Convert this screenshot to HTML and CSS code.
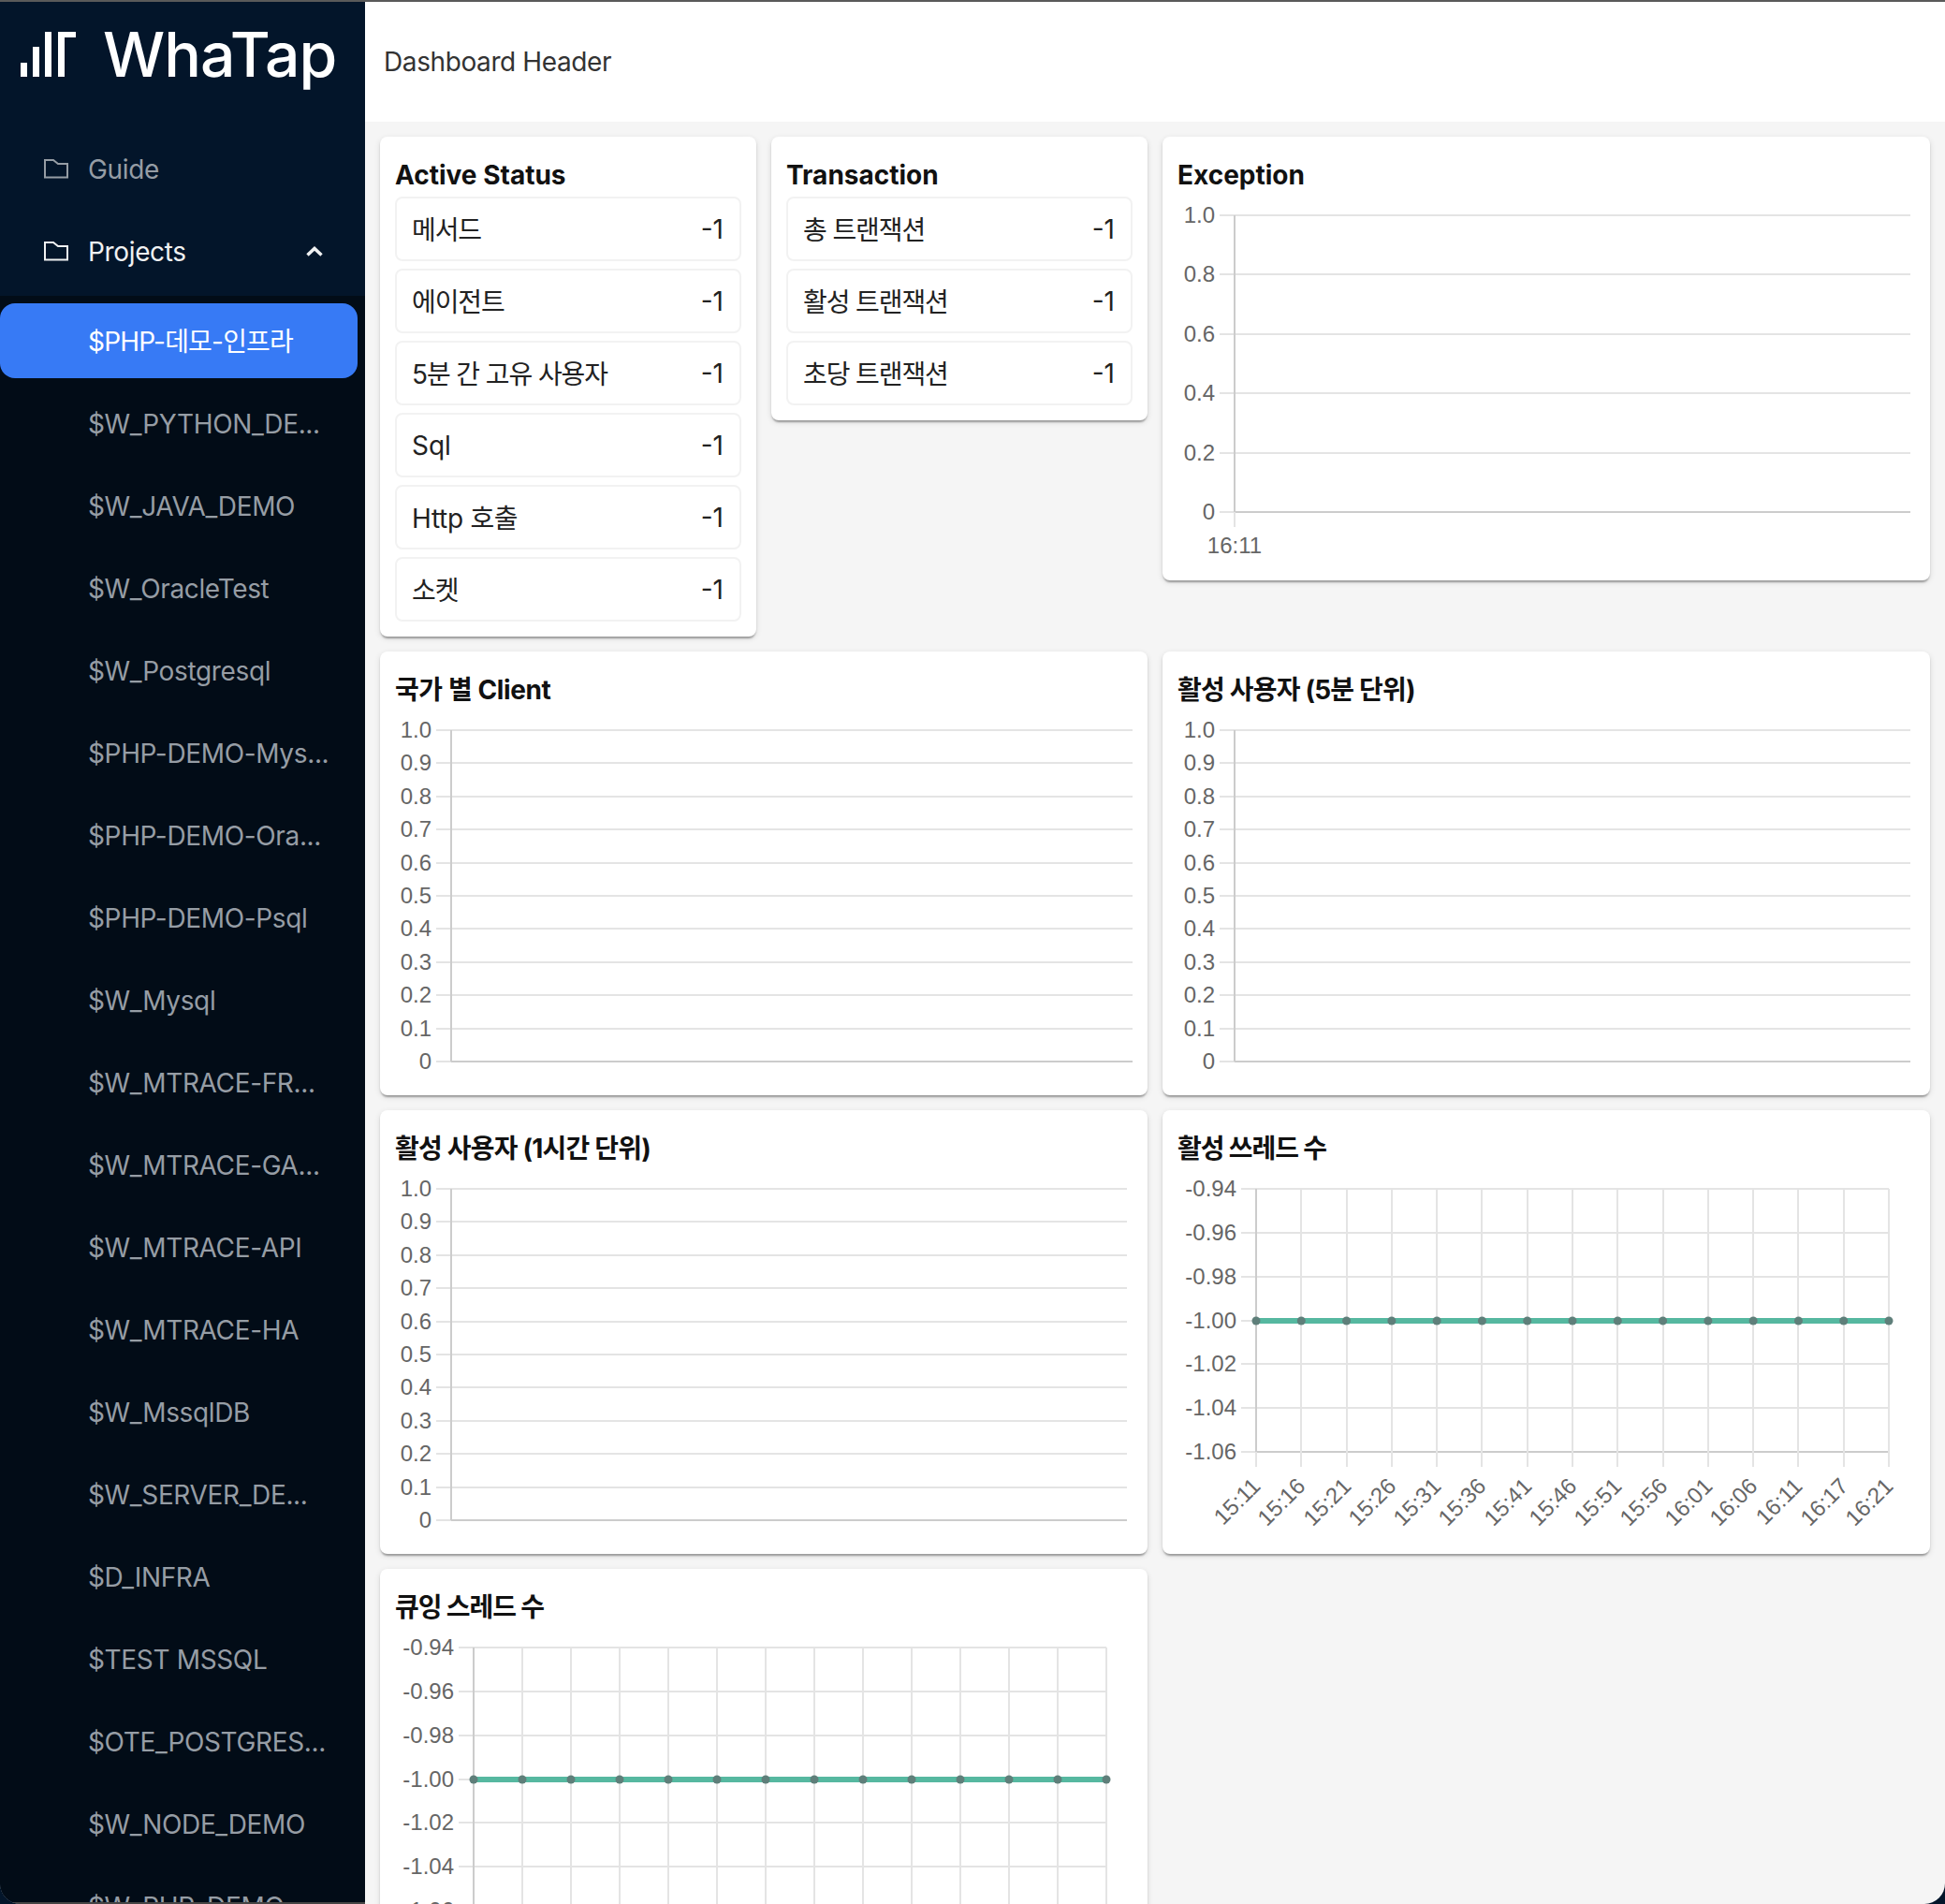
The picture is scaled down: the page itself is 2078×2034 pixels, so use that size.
FILE: index.html

```html
<!DOCTYPE html>
<html lang="ko">
<head>
  <meta charset="UTF-8" />
  <title>WhaTap Dashboard</title>
  <link rel="stylesheet" href="styles.css">
</head>
<body>
  <div class="app">
    <aside class="sidebar">
      <div class="logo">
        <svg class="logo-mark" width="59" height="48" viewBox="0 0 59 48">
          <rect x="0" y="33" width="7" height="15" />
          <rect x="13" y="16" width="7" height="32" />
          <rect x="26" y="0" width="7" height="48" />
          <path d="M40 0H59V6H47V48H40Z" />
        </svg>
        <span class="logo-text">WhaTap</span>
      </div>

      <nav class="menu">
        <div class="menu-item">
          <svg class="folder" width="26" height="22" viewBox="0 0 26 22"><path d="M1 2H10L15 6H25V20.5H1Z" /></svg>
          <span>Guide</span>
        </div>
        <div class="menu-item open">
          <svg class="folder" width="26" height="22" viewBox="0 0 26 22"><path d="M1 2H10L15 6H25V20.5H1Z" /></svg>
          <span>Projects</span>
          <svg class="chevron" width="18" height="11" viewBox="0 0 18 11"><path d="M1.500 9.500L9 2.500L16.500 9.500" /></svg>
        </div>
        <div class="submenu">
          <div class="sub-item active">$PHP-데모-인프라</div>
          <div class="sub-item">$W_PYTHON_DE...</div>
          <div class="sub-item">$W_JAVA_DEMO</div>
          <div class="sub-item">$W_OracleTest</div>
          <div class="sub-item">$W_Postgresql</div>
          <div class="sub-item">$PHP-DEMO-Mys...</div>
          <div class="sub-item">$PHP-DEMO-Ora...</div>
          <div class="sub-item">$PHP-DEMO-Psql</div>
          <div class="sub-item">$W_Mysql</div>
          <div class="sub-item">$W_MTRACE-FR...</div>
          <div class="sub-item">$W_MTRACE-GA...</div>
          <div class="sub-item">$W_MTRACE-API</div>
          <div class="sub-item">$W_MTRACE-HA</div>
          <div class="sub-item">$W_MssqlDB</div>
          <div class="sub-item">$W_SERVER_DE...</div>
          <div class="sub-item">$D_INFRA</div>
          <div class="sub-item">$TEST MSSQL</div>
          <div class="sub-item">$OTE_POSTGRES...</div>
          <div class="sub-item">$W_NODE_DEMO</div>
          <div class="sub-item">$W_PHP_DEMO</div>
        </div>
      </nav>
    </aside>

    <div class="main">
      <header class="page-header">Dashboard Header</header>

      <div class="dashboard">
        <section class="card">
          <h2>Active Status</h2>
          <div class="stat-list">
            <div class="stat"><span class="ko">메서드</span><span>-1</span></div>
            <div class="stat"><span class="ko">에이전트</span><span>-1</span></div>
            <div class="stat"><span class="ko">5분 간 고유 사용자</span><span>-1</span></div>
            <div class="stat"><span>Sql</span><span>-1</span></div>
            <div class="stat"><span class="ko-mixed">Http 호출</span><span>-1</span></div>
            <div class="stat"><span class="ko">소켓</span><span>-1</span></div>
          </div>
        </section>

        <section class="card">
          <h2>Transaction</h2>
          <div class="stat-list">
            <div class="stat"><span class="ko">총 트랜잭션</span><span>-1</span></div>
            <div class="stat"><span class="ko">활성 트랜잭션</span><span>-1</span></div>
            <div class="stat"><span class="ko">초당 트랜잭션</span><span>-1</span></div>
          </div>
        </section>

        <section class="card wide">
          <h2>Exception</h2>
          <div class="chart" id="chartException"></div>
        </section>

        <section class="card wide">
          <h2 class="ko-title mixed">국가 별 Client</h2>
          <div class="chart" id="chartCountry"></div>
        </section>

        <section class="card wide">
          <h2 class="ko-title">활성 사용자 (5분 단위)</h2>
          <div class="chart" id="chartUser5m"></div>
        </section>

        <section class="card wide">
          <h2 class="ko-title">활성 사용자 (1시간 단위)</h2>
          <div class="chart" id="chartUser1h"></div>
        </section>

        <section class="card wide">
          <h2 class="ko-title short">활성 쓰레드 수</h2>
          <div class="chart" id="chartThreads"></div>
        </section>

        <section class="card wide">
          <h2 class="ko-title short">큐잉 스레드 수</h2>
          <div class="chart" id="chartQueue"></div>
        </section>
      </div>
    </div>
  </div>

  <script src="charts.js"></script>
</body>
</html>
```

FILE: styles.css

```css
html, body {
  margin: 0;
  padding: 0;
  height: 2034px;
  overflow: hidden;
  background: #03152a;
}
body {
  font-family: Inter, "Noto Sans CJK KR", sans-serif;
  font-size: 28px;
  color: #222;
}
.app {
  display: flex;
  height: 2032px;
  border-top: 2px solid #5a5a5a;
  border-radius: 0 0 22px 22px;
  overflow: hidden;
  background: #f5f5f5;
}

/* sidebar */
.sidebar {
  flex: none;
  width: 390px;
  height: 2030px;
  overflow: hidden;
  background: #03152a;
  border-bottom: 2px solid #454545;
  letter-spacing: -0.35px;
}
.logo {
  display: flex;
  align-items: center;
  height: 66px;
  padding: 23px 0 41px 22px;
}
.logo-mark {
  fill: #fff;
}
.logo-text {
  margin-left: 29px;
  font-size: 66px;
  line-height: 66px;
  font-weight: 500;
  letter-spacing: -1px;
  color: #fff;
}
.menu {
  display: flex;
  flex-direction: column;
  gap: 8px;
  padding-top: 8px;
}
.menu-item {
  display: flex;
  align-items: center;
  gap: 21px;
  height: 80px;
  padding: 0 45px 0 47px;
  color: #969da5;
}
.menu-item span {
  padding-top: 2px;
}
.menu-item.open {
  color: #f0f1f2;
}
.folder {
  flex: none;
  fill: none;
  stroke: currentColor;
  stroke-width: 2;
}
.chevron {
  flex: none;
  margin-left: auto;
  fill: none;
  stroke: currentColor;
  stroke-width: 3.500;
}
.submenu {
  display: flex;
  flex-direction: column;
  gap: 8px;
  padding-top: 8px;
  background: #020c17;
}
.sub-item {
  flex: none;
  height: 80px;
  line-height: 82px;
  margin-right: 8px;
  padding-left: 94px;
  color: #969da5;
  white-space: nowrap;
}
.sub-item.active {
  background: #377af5;
  border-radius: 16px;
  color: #fff;
  letter-spacing: -0.8px;
}

/* main area */
.main {
  flex: 1;
  min-width: 0;
}
.page-header {
  height: 128px;
  line-height: 129px;
  padding-left: 20px;
  background: #fff;
  color: #333;
  letter-spacing: -0.4px;
}
.dashboard {
  display: grid;
  grid-template-columns: repeat(4, 402px);
  gap: 16px;
  align-items: start;
  padding: 16px;
}
.card {
  padding: 17px 16px;
  background: #fff;
  border-radius: 8px;
  box-shadow: 0 4px 2px -2px rgba(0,0,0,0.2), 0 2px 2px 0 rgba(0,0,0,0.14), 0 2px 6px 0 rgba(0,0,0,0.12);
}
.card.wide {
  grid-column: span 2;
}
.card h2 {
  margin: 0;
  height: 47px;
  font-size: 28px;
  line-height: 49px;
  font-weight: 700;
  color: #111;
}
.card h2.ko-title {
  letter-spacing: -0.8px;
}
.card h2.ko-title.mixed {
  letter-spacing: -0.4px;
}
.card h2.ko-title.short {
  letter-spacing: -1.1px;
}
.stat-list {
  display: flex;
  flex-direction: column;
  gap: 8px;
  margin-bottom: -1px;
}
.stat {
  display: flex;
  align-items: center;
  justify-content: space-between;
  box-sizing: border-box;
  height: 69px;
  padding: 1px 17px 0 16px;
  border: 2px solid #f2f2f2;
  border-radius: 8px;
  color: #222;
}
.stat .ko {
  margin-top: -2px;
  letter-spacing: -1.1px;
}
.stat .ko-mixed {
  margin-top: -2px;
  letter-spacing: -0.3px;
}

/* charts */
.chart svg {
  display: block;
  width: 100%;
  height: 393px;
}
.chart text {
  font-family: "Liberation Sans", Arial, sans-serif;
  font-size: 24px;
  fill: #666;
}
.grid-line {
  stroke: #e4e4e4;
  stroke-width: 2;
}
.axis-line {
  stroke: #ccc;
  stroke-width: 2;
}
.data-line {
  stroke: #56b8a0;
  stroke-width: 6;
}
.data-dot {
  fill: #5f7f7a;
}
```

FILE: charts.js

```js
const unitTicks = ["1.0", "0.9", "0.8", "0.7", "0.6", "0.5", "0.4", "0.3", "0.2", "0.1", "0"];
const fiveTicks = ["1.0", "0.8", "0.6", "0.4", "0.2", "0"];
const minusTicks = ["-0.94", "-0.96", "-0.98", "-1.00", "-1.02", "-1.04", "-1.06"];

const threadTimes = ["15:11", "15:16", "15:21", "15:26", "15:31", "15:36", "15:41", "15:46", "15:51", "15:56", "16:01", "16:06", "16:11", "16:17", "16:21"];
const queueTimes = threadTimes.slice(0, 14);

function line(x1, y1, x2, y2, cls) {
  return `<line x1="${x1}" y1="${y1}" x2="${x2}" y2="${y2}" class="${cls}" />`;
}

function drawChart(id, opt) {
  const { left, axis, right, top, bottom, ticks, times = [], dataIndex, rotate } = opt;
  const labelX = left - 5;
  const stepY = (bottom - top) / (ticks.length - 1);
  let out = "";

  ticks.forEach((t, i) => {
    const y = Math.round(top + stepY * i);
    out += line(left, y, axis, y, "grid-line");
    out += line(axis, y, right, y, i === ticks.length - 1 ? "axis-line" : "grid-line");
    out += `<text x="${labelX}" y="${y + 8}" text-anchor="end">${t}</text>`;
  });

  const stepX = times.length > 1 ? (right - axis) / (times.length - 1) : 0;
  times.forEach((t, i) => {
    const x = Math.round(axis + stepX * i);
    if (i > 0) out += line(x, top, x, bottom, "grid-line");
    out += line(x, bottom, x, bottom + 16, "grid-line");
    if (rotate) {
      const tx = x + 6, ty = bottom + 38;
      out += `<text x="${tx}" y="${ty}" text-anchor="end" transform="rotate(-45 ${tx} ${ty})">${t}</text>`;
    } else {
      out += `<text x="${x}" y="${bottom + 44}" text-anchor="middle">${t}</text>`;
    }
  });
  out += line(axis, top, axis, bottom, "axis-line");

  if (dataIndex !== undefined) {
    const y = Math.round(top + stepY * dataIndex);
    out += line(axis, y, right, y, "data-line");
    times.forEach((t, i) => {
      out += `<circle cx="${axis + stepX * i}" cy="${y}" r="4.500" class="data-dot" />`;
    });
  }

  document.getElementById(id).innerHTML = `<svg viewBox="0 0 788 393">${out}</svg>`;
}

drawChart("chartException", { left: 45, axis: 61, right: 783, top: 20, bottom: 337, ticks: fiveTicks, times: ["16:11"] });
drawChart("chartCountry", { left: 44, axis: 60, right: 788, top: 20, bottom: 374, ticks: unitTicks });
drawChart("chartUser5m", { left: 45, axis: 61, right: 783, top: 20, bottom: 374, ticks: unitTicks });
drawChart("chartUser1h", { left: 44, axis: 60, right: 782, top: 20, bottom: 374, ticks: unitTicks });
drawChart("chartThreads", { left: 68, axis: 84, right: 760, top: 20, bottom: 301, ticks: minusTicks, times: threadTimes, dataIndex: 3, rotate: true });
drawChart("chartQueue", { left: 68, axis: 84, right: 760, top: 20, bottom: 301, ticks: minusTicks, times: queueTimes, dataIndex: 3, rotate: true });
```
